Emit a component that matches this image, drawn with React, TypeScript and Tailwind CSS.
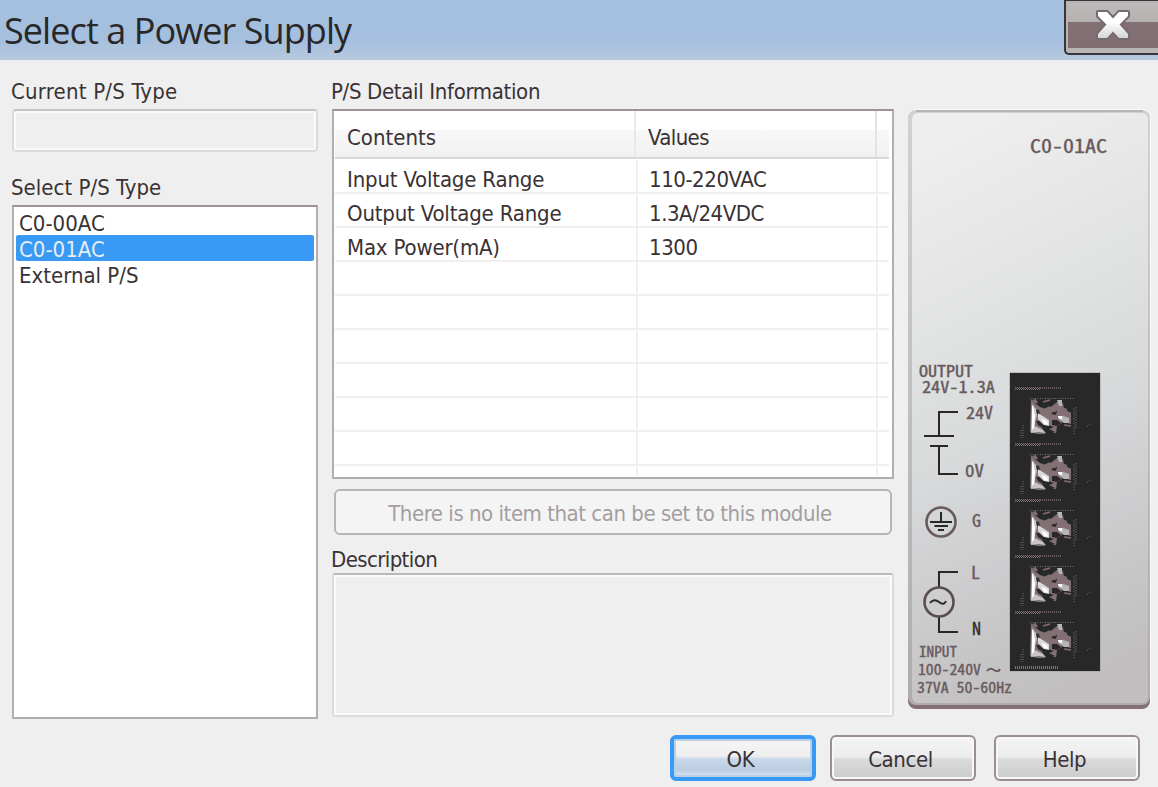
import type { ReactNode } from "react";

const psTypes = ["C0-00AC", "C0-01AC", "External P/S"];
const selectedType = "C0-01AC";

const details: [string, string][] = [
  ["Input Voltage Range", "110-220VAC"],
  ["Output Voltage Range", "1.3A/24VDC"],
  ["Max Power(mA)", "1300"],
  ["", ""],
  ["", ""],
  ["", ""],
  ["", ""],
  ["", ""],
  ["", ""],
];

function Label({ tight, children }: { tight: string; children: ReactNode }) {
  return <div className={`h-[26px] whitespace-nowrap leading-[28px] ${tight}`}>{children}</div>;
}

function CloseButton() {
  return (
    <button
      aria-label="Close"
      className="flex h-[55px] w-[94px] rounded-bl-[5px] border-b-2 border-l-2 border-t border-[#3b3436] bg-[#b9b5b5] pb-[5px] pl-[2px] pt-[2px]"
    >
      <span className="flex h-full w-full items-start bg-[linear-gradient(#bdb9b9_0%,#b6b1b1_42%,#837074_42%,#806e72_100%)] pl-[26px] pt-[6px]">
        <svg width="38" height="34" viewBox="0 0 38 34">
          <defs>
            <linearGradient id="cross" x1="0" y1="0" x2="0" y2="1">
              <stop offset="0.4" stopColor="#fff" />
              <stop offset="1" stopColor="#d3d5d6" />
            </linearGradient>
          </defs>
          <path
            d="M4 3H13L19 9.5L25 3H34V7L25.5 15.5L34 25V29H25L19 22.5L13 29H4V25L12.5 15.5L4 7Z"
            fill="url(#cross)"
            stroke="#776a6d"
            strokeWidth="4"
            paintOrder="stroke"
            strokeLinejoin="round"
          />
        </svg>
      </span>
    </button>
  );
}

function Screw({ y }: { y: number }) {
  return (
    <g transform={`translate(122 ${y})`}>
      <path d="M-15 -10.5H10M-14 -9.5H10M-15 -8.5H10" stroke="#837074" strokeWidth="1" strokeDasharray="1 1" />
      <path d="M10 -10H31" stroke="#837074" strokeWidth="2" strokeDasharray="1 1" opacity="0.7" />
      <path d="M0 .5H45M44 10V36M46 9V30M-7 27V40M-9 32V40" stroke="#837074" strokeWidth="1" strokeDasharray="1 1.5" />
      <path d="M1 1L6 6L10 9L16 11L22 8L27 4L33 5L34 11L41 15V26L33 24L27 28L26 35H20L16 31L12 29L15 36H7L0 34Z" fill="#837074" />
      <path d="M2 2L6 1L8 5L5 5Z" fill="#837074" />
      <path d="M12 30L15 26L24 29L19 31L25 34L20 36ZM22 22L27 22L31 25L27 28L22 27ZM23 14L27 13L26 17L21 16ZM5 11L9 12L10 16L6 17ZM6 23L9 23L15 28V31L8 27Z" fill="#292828" />
      <path d="M2 6L6 11L7 17L5 24V28L13 32L16 35L8 34L1 35Z" fill="#c7c5c6" />
      <path d="M3 8L5 18L4 30L2 32V8Z" fill="#fff" />
      <path d="M8 15L11 17L19 22V28L14 27L8 21Z" fill="#d7d9da" />
      <path d="M12 21L17 23L18 27L14 26Z" fill="#fff" />
      <path d="M28 18L33 18L39 20V25H34L29 21Z" fill="#b9b5b5" />
      <path d="M28 18H32V21H29Z" fill="#fff" />
      <path d="M27 2H32V8L29 8Z" fill="#b9b5b5" />
      <path d="M13 4L20 2M15 11L20 9M24 14L27 11M34 27L41 28M33 10L37 12" stroke="#837074" strokeWidth="1.5" />
      <path d="M57 29L60 26" stroke="#837074" strokeDasharray="1 2" />
    </g>
  );
}

function Mark({ x, y, w, size = 17, dark = false, children }: { x: number; y: number; w: number; size?: number; dark?: boolean; children: string }) {
  return (
    <text
      x={x}
      y={y}
      textLength={w}
      lengthAdjust="spacingAndGlyphs"
      fontSize={size}
      fill={dark ? "#2f2a2b" : "#685a5d"}
      stroke={dark ? "#2f2a2b" : "#685a5d"}
      strokeWidth="0.35"
      className="font-['Noto_Sans_CJK_JP',sans-serif] [font-feature-settings:'hwid']"
    >
      {children}
    </text>
  );
}

function PowerSupply() {
  return (
    <svg width="244" height="602" viewBox="0 0 244 602" className="block">
      <defs>
        <linearGradient id="case" x1="0.35" y1="0" x2="0.55" y2="1">
          <stop offset="0" stopColor="#eeeeee" />
          <stop offset="0.3" stopColor="#e2e3e3" />
          <stop offset="0.55" stopColor="#d7d9da" />
          <stop offset="0.75" stopColor="#cdccce" />
          <stop offset="1" stopColor="#c0bebe" />
        </linearGradient>
        <linearGradient id="caseSide" x1="0" y1="0" x2="0" y2="1">
          <stop offset="0" stopColor="#d2d1d1" />
          <stop offset="1" stopColor="#b0aaab" />
        </linearGradient>
      </defs>
      <rect x="0" y="0" width="243" height="600" rx="9" fill="#fafafa" />
      <rect x="0" y="2" width="242" height="598" rx="8" fill="#837074" />
      <rect x="0" y="1" width="242" height="595" rx="8" fill="url(#caseSide)" />
      <rect x="4" y="4" width="236" height="590" rx="6" fill="url(#case)" />
      <path d="M8 2H235" stroke="#b9b5b5" strokeWidth="2" />

      <g transform="translate(0 1)">
        <Mark x={122} y={43} w={77} size={19}>C0-01AC</Mark>
        <Mark x={11} y={267} w={54} size={16}>OUTPUT</Mark>
        <Mark x={14} y={283} w={73} size={16}>24V-1.3A</Mark>
        <Mark x={58} y={309} w={27}>24V</Mark>
        <Mark x={57} y={367} w={19}>0V</Mark>
        <Mark x={64} y={417} w={9}>G</Mark>
        <Mark x={63} y={469} w={9}>L</Mark>
        <Mark x={64} y={525} w={9} dark>N</Mark>
        <Mark x={11} y={547} w={38} size={14}>INPUT</Mark>
        <Mark x={10} y={565} w={63} size={15}>100-240V</Mark>
        <Mark x={9} y={583} w={95} size={15}>37VA 50-60Hz</Mark>
        <path d="M79 561Q82 557 86 560T92 559" fill="none" stroke="#685a5d" strokeWidth="2" />

        <g fill="none" stroke="#292828" strokeWidth="2">
          <path d="M50 302H31V326M16 326H46M22 336H40M31 336V364H50" />
          <path d="M33 402V412M22 412H44M26.5 416H40M30 420H36" />
          <path d="M50 462H31V478M31 507V522H50" />
          <path d="M22 493Q26 488 31 492T38 491" />
        </g>
        <circle cx="33" cy="412" r="14.5" fill="none" stroke="#685a5d" strokeWidth="2.6" />
        <circle cx="31" cy="492" r="14.5" fill="none" stroke="#594d50" strokeWidth="2.6" />

        <rect x="101.5" y="262.5" width="91" height="299" fill="#a39b9c" />
        <rect x="102" y="263" width="90" height="298" fill="#292828" />
        {[288, 344, 400, 456, 512].map((y) => (
          <Screw key={y} y={y} />
        ))}
        <path d="M107 557.5H151" stroke="#837074" strokeWidth="3" strokeDasharray="1 1" />
      </g>
    </svg>
  );
}

function ActionButton({ children }: { children: string }) {
  return (
    <button className="h-[46px] w-[146px] rounded-[6px] border-2 border-[#9a8e90] bg-[linear-gradient(#f5f5f5_0%,#ececec_48%,#dadbdc_52%,#cbcbcc_100%)] pr-[5px] pt-[4px] leading-[36px] tracking-[-0.4px] shadow-[inset_0_0_0_2px_#f7f7f7]">
      {children}
    </button>
  );
}

export default function App() {
  return (
    <div className="flex h-[787px] w-[1158px] flex-col overflow-hidden bg-[#efefef] font-['DejaVu_Sans_Condensed','DejaVu_Sans',sans-serif] text-[22px] text-[#3a3234]">
      <header className="flex h-[60px] shrink-0 items-start justify-between bg-[linear-gradient(#a5bfde_0%,#a5bfde_65%,#b6c9de_100%)]">
        <h1 className="whitespace-nowrap pl-[4px] pt-[6px] font-['Open_Sans',sans-serif] text-[36px] leading-[50px] tracking-[-0.92px] text-[#292828]">
          Select a Power Supply
        </h1>
        <CloseButton />
      </header>

      <main className="flex h-[660px] shrink-0 pl-[11px] pt-[18px]">
        <section className="w-[307px]">
          <Label tight="tracking-[0.2px]">Current P/S Type</Label>
          <div className="ml-[1px] mt-[5px] h-[43px] rounded-[4px] border-2 border-[#dcdcdc] border-t-[#c6c4c4] shadow-[inset_0_0_0_2px_#fafafa]" />
          <div className="mt-[22px]">
            <Label tight="tracking-[0.02px]">Select P/S Type</Label>
          </div>
          <ul className="ml-[1px] mt-[5px] h-[514px] border-2 border-[#b3adad] border-t-[#9d9394] bg-white px-[2px] pt-[2px]">
            {psTypes.map((type) => (
              <li
                key={type}
                className={
                  type === selectedType
                    ? "h-[26px] rounded-[2px] bg-[#389af4] pl-[3px] leading-[29px] tracking-[0px] text-[#e6edf4]"
                    : "h-[26px] pl-[3px] leading-[29px] tracking-[0px]"
                }
              >
                {type}
              </li>
            ))}
          </ul>
        </section>

        <section className="ml-[13px] w-[563px]">
          <Label tight="tracking-[-0.34px]">P/S Detail Information</Label>
          <div className="ml-[1px] mt-[5px] h-[370px] w-[562px] overflow-hidden border-2 border-[#b3adad] border-t-[#9d9394] bg-white pl-[1px] pr-[3px]">
            <div className="mb-[1px] flex h-[48px] border-b-2 border-[#d7d9da] bg-[linear-gradient(#fff_0%,#fff_40%,#f8f8f8_42%,#f1f1f1_100%)] leading-[53px]">
              <div className="w-[301px] border-r-2 border-[#e9e9ea] pl-[12px]">Contents</div>
              <div className="w-[241px] border-r-2 border-[#e2e3e3] pl-[12px] tracking-[-0.6px]">Values</div>
            </div>
            {details.map(([name, value], i) => (
              <div key={i} className="flex h-[34px] border-b-2 border-[#efefef] leading-[39px]">
                <div className="w-[303px] whitespace-nowrap border-r-2 border-[#efefef] pl-[12px] tracking-[-0.18px]">{name}</div>
                <div className="w-[240px] border-r-2 border-[#efefef] pl-[11px] tracking-[-0.45px]">{value}</div>
              </div>
            ))}
            <div className="flex h-[9px]">
              <div className="w-[303px] border-r-2 border-[#efefef]" />
              <div className="w-[240px] border-r-2 border-[#efefef]" />
            </div>
          </div>
          <button
            disabled
            className="ml-[3px] mt-[10px] block h-[46px] w-[558px] whitespace-nowrap rounded-[6px] border-2 border-[#b5b6b9] bg-[#f4f4f4] pr-[6px] pt-[3px] leading-[36px] tracking-[-0.47px] text-[#a39e9f]"
          >
            There is no item that can be set to this module
          </button>
          <div className="mt-[11px]">
            <Label tight="tracking-[-0.6px]">Description</Label>
          </div>
          <div className="ml-[1px] mt-[1px] h-[144px] w-[562px] rounded-[3px] border-2 border-[#dcdcdc] border-t-[#b9b9bb] shadow-[inset_0_0_0_2px_#fafafa]" />
        </section>

        <section className="ml-[14px] mt-[31px]">
          <PowerSupply />
        </section>
      </main>

      <footer className="flex pl-[670px] pt-[15px]">
        <button className="h-[46px] w-[146px] rounded-[6px] border-4 border-[#389af4] bg-[linear-gradient(#f5f5f5_0%,#efefef_45%,#cbd9e9_52%,#b9cce2_80%,#dce4ec_100%)] pr-[5px] pt-[3px] leading-[36px] tracking-[-0.2px] shadow-[inset_0_0_0_2px_#b9d0e8]">
          OK
        </button>
        <div className="ml-[14px]">
          <ActionButton>Cancel</ActionButton>
        </div>
        <div className="ml-[18px]">
          <ActionButton>Help</ActionButton>
        </div>
      </footer>
    </div>
  );
}
